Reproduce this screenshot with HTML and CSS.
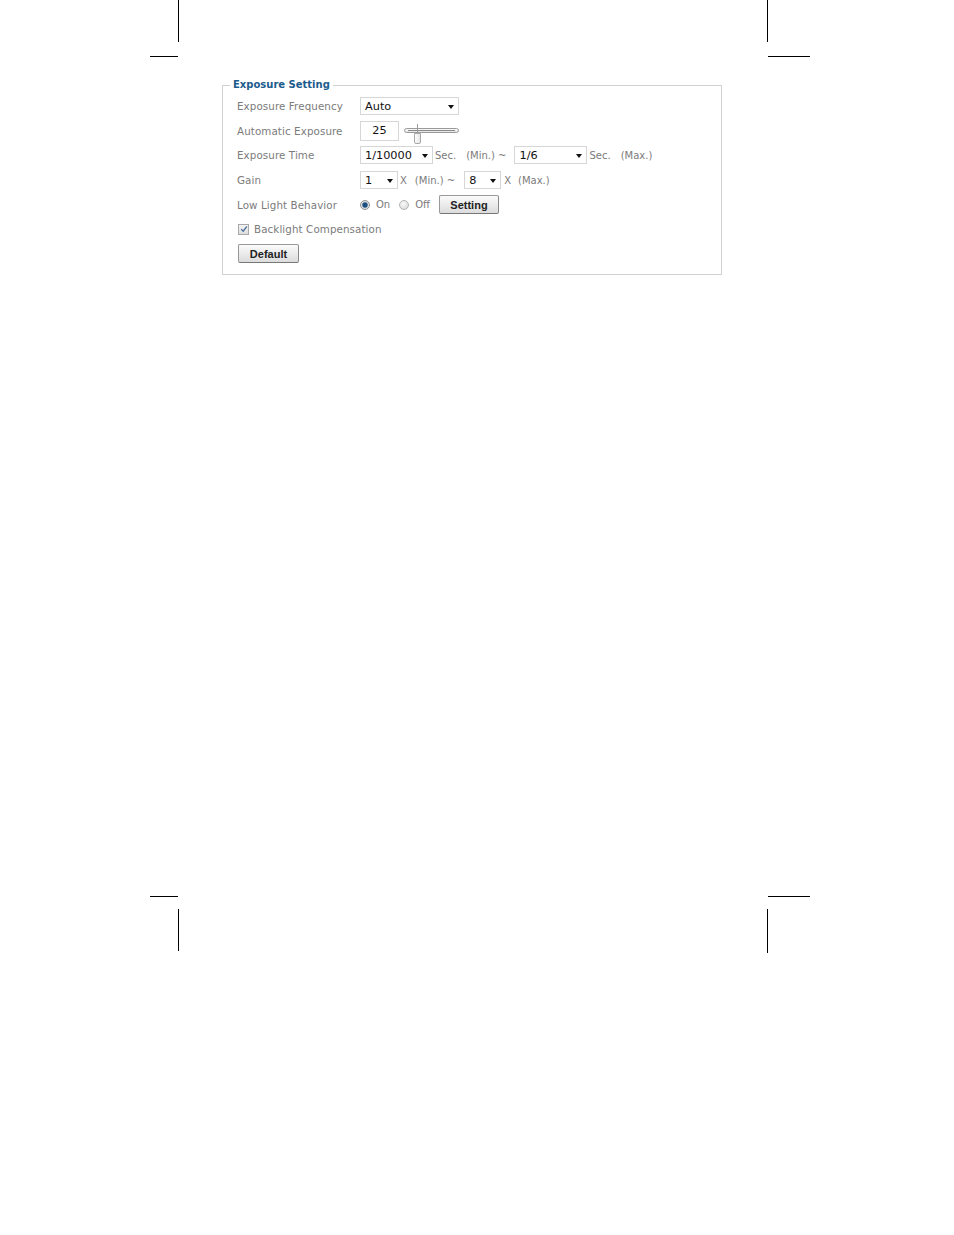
FILE: index.html
```html
<!DOCTYPE html>
<html>
<head>
<meta charset="utf-8">
<title>Exposure Setting</title>
<link rel="stylesheet" href="styles.css">
</head>
<body>
<div class="page">
  <div class="mark v tl"></div><div class="mark h tlh"></div>
  <div class="mark v tr"></div><div class="mark h trh"></div>
  <div class="mark h blh"></div><div class="mark v bl"></div>
  <div class="mark h brh"></div><div class="mark v br"></div>

  <fieldset class="panel">
    <legend class="panel-title">Exposure Setting</legend>
    <div class="form">
      <div class="label">Exposure Frequency</div>
      <div class="ctrl">
        <div class="select w-freq"><span>Auto</span><i class="arrow"></i></div>
      </div>

      <div class="label">Automatic Exposure</div>
      <div class="ctrl">
        <div class="textbox">25</div>
        <div class="slider">
          <div class="track"></div>
          <div class="thumb-line"></div>
          <div class="thumb"></div>
        </div>
      </div>

      <div class="label">Exposure Time</div>
      <div class="ctrl">
        <div class="select w-time"><span>1/10000</span><i class="arrow"></i></div>
        <span class="unit u-sec">Sec.</span>
        <span class="unit u-min">(Min.) ~</span>
        <div class="select w-time"><span>1/6</span><i class="arrow"></i></div>
        <span class="unit u-sec">Sec.</span>
        <span class="unit u-max">(Max.)</span>
      </div>

      <div class="label">Gain</div>
      <div class="ctrl">
        <div class="select w-gain"><span>1</span><i class="arrow"></i></div>
        <span class="unit u-x">X</span>
        <span class="unit u-gmin">(Min.) ~</span>
        <div class="select w-gain2"><span>8</span><i class="arrow"></i></div>
        <span class="unit u-x2">X</span>
        <span class="unit">(Max.)</span>
      </div>

      <div class="label">Low Light Behavior</div>
      <div class="ctrl">
        <span class="radio checked"></span><span class="unit r-on">On</span>
        <span class="radio"></span><span class="unit r-off">Off</span>
        <div class="button b-setting">Setting</div>
      </div>

      <div class="full check-row">
        <span class="checkbox"><svg viewBox="0 0 10 10" width="8" height="8"><path d="M1.5 5.2 L4 7.8 L8.6 1.6" fill="none" stroke="#4a6f9a" stroke-width="1.6"/></svg></span>
        <span class="unit check-text">Backlight Compensation</span>
      </div>

      <div class="full">
        <div class="button b-default">Default</div>
      </div>
    </div>
  </fieldset>
</div>
</body>
</html>
```

FILE: styles.css
```css
html, body {
  margin: 0;
  padding: 0;
  background: #fff;
}
.page {
  position: relative;
  width: 954px;
  height: 1235px;
  padding-top: 78px;
  box-sizing: border-box;
  font-family: "DejaVu Sans", Verdana, sans-serif;
}
.mark { position: absolute; background: #000; }
.mark.v { width: 1px; }
.mark.h { height: 1px; }
.tl { left: 178px; top: 0; height: 42px; }
.tlh { left: 150px; top: 56px; width: 28px; }
.tr { left: 767px; top: 0; height: 42px; }
.trh { left: 768px; top: 56px; width: 42px; }
.blh { left: 150px; top: 896px; width: 28px; height: 2px; }
.bl { left: 178px; top: 909px; height: 42px; }
.brh { left: 768px; top: 896px; width: 42px; height: 2px; }
.br { left: 767px; top: 909px; height: 44px; }

.panel {
  margin: 0 0 0 222px;
  width: 500px;
  box-sizing: border-box;
  border: 1px solid #d2d2d2;
  padding: 2px 14px 8px 14px;
  min-width: 0;
}
.panel-title {
  margin-left: -7px;
  padding: 0 3px;
  font-size: 10px;
  line-height: 14px;
  font-weight: bold;
  color: #1b5b8c;
}
.form {
  display: grid;
  grid-template-columns: 123px 1fr;
  grid-auto-rows: 24.6px;
  align-items: center;
}
.label {
  font-size: 10.3px;
  color: #7b7b7b;
  letter-spacing: 0.1px;
  white-space: nowrap;
}
.full { grid-column: 1 / 3; display: flex; align-items: center; }
.ctrl { display: flex; align-items: center; }

.select {
  position: relative;
  display: flex;
  align-items: center;
  height: 18px;
  box-sizing: border-box;
  border: 1px solid #d6d6d6;
  background: #fff;
  font-size: 11.3px;
  color: #111;
  padding-left: 4px;
}
.select .arrow {
  position: absolute;
  right: 4px;
  top: 7px;
  width: 0; height: 0;
  border-left: 3.5px solid transparent;
  border-right: 3.5px solid transparent;
  border-top: 4px solid #111;
}
.w-freq { width: 99px; }
.w-time { width: 73px; }
.w-gain { width: 38px; }
.w-gain2 { width: 37px; }

.textbox {
  width: 39px; height: 20px;
  box-sizing: border-box;
  border: 1px solid #d6d6d6;
  display: flex; align-items: center; justify-content: center;
  font-size: 11.3px; color: #111;
}
.slider {
  position: relative;
  margin-left: 5px;
  width: 55px; height: 24px;
}
.track {
  position: absolute;
  left: 0; right: 0; top: 9px;
  height: 5px;
  box-sizing: border-box;
  border: 1px solid #9a9a9a;
  border-radius: 3px;
  background: linear-gradient(#fafafa, #e4e4e4);
}
.track::after {
  content: "";
  position: absolute;
  left: 3px; right: 3px; top: 1px;
  height: 1px;
  background: #8a8a8a;
}
.thumb-line {
  position: absolute;
  left: 13px; top: 5px;
  width: 1px; height: 9px;
  background: #9a9a9a;
}
.thumb {
  position: absolute;
  left: 10px; top: 14px;
  width: 7px; height: 11px;
  box-sizing: border-box;
  border: 1px solid #a8a8a8;
  border-radius: 0 0 2px 2px;
  background: linear-gradient(90deg, #fdfdfd, #e6e6e6);
}

.unit {
  font-size: 10px;
  color: #7b7b7b;
  white-space: nowrap;
}
.u-sec { margin-left: 2px; }
.u-min { margin-left: 10px; margin-right: 8px; }
.u-max { margin-left: 10px; }
.u-x { margin-left: 2px; }
.u-gmin { margin-left: 8px; margin-right: 9px; }
.u-x2 { margin-left: 3px; margin-right: 7px; }

.radio {
  width: 10px; height: 10px;
  box-sizing: border-box;
  border-radius: 50%;
  border: 1px solid #b4b4b4;
  background: radial-gradient(circle at 40% 35%, #fafafa, #d4d4d4);
}
.radio.checked {
  background: radial-gradient(circle, #1d4f7e 0 2.2px, #8fa6bd 2.8px, #e4e4e4 3.6px);
  border-color: #8f8f8f;
}
.r-on { margin-left: 6px; margin-right: 9px; }
.r-off { margin-left: 6px; margin-right: 9px; }

.button {
  display: flex; align-items: center; justify-content: center;
  height: 19px; box-sizing: border-box;
  border: 1px solid #999;
  border-bottom-color: #777;
  border-right-color: #888;
  border-radius: 2px;
  background: linear-gradient(#fbfbfb, #e8e8e8 60%, #dcdcdc);
  font-family: "Liberation Sans", Arial, sans-serif;
  font-size: 11px;
  font-weight: bold;
  color: #222;
}
.b-setting { width: 60px; }
.b-default { width: 61px; margin-left: 1px; }

.check-row { padding-left: 1px; }
.checkbox {
  width: 11px; height: 11px;
  box-sizing: border-box;
  border: 1px solid #a9a9a9;
  background: linear-gradient(#f4f4f4, #dedede);
  display: flex; align-items: center; justify-content: center;
}
.check-text { margin-left: 5px; font-size: 10.3px; letter-spacing: 0.1px; }
```
